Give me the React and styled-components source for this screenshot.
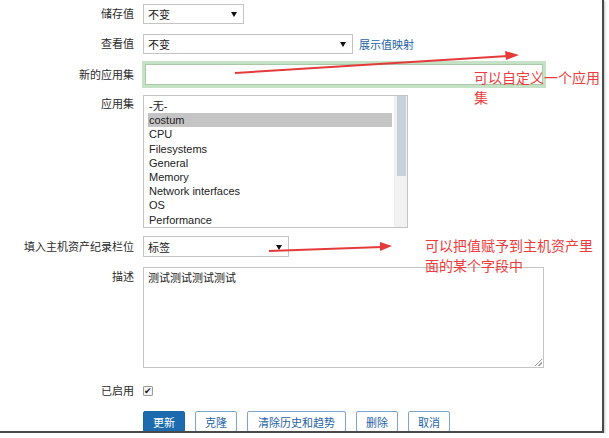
import React from "react";
import styled, { createGlobalStyle } from "styled-components";

const Global = createGlobalStyle`
  html, body { margin: 0; padding: 0; background: #ffffff; }
  body { font-family: "Liberation Sans", "Noto Sans CJK SC", sans-serif; }
`;

const Page = styled.div`
  position: relative;
  width: 604px;
  height: 433px;
  box-sizing: border-box;
  background: #fff;
  border-right: 2px solid #4a4a4a;
  border-bottom: 2px solid #4a4a4a;
  box-shadow: 1px 1px 2px rgba(0, 0, 0, 0.25);
  overflow: hidden;
`;

const Form = styled.div`
  display: grid;
  grid-template-columns: 134px 1fr;
  column-gap: 9px;
  row-gap: 10px;
  padding-top: 4px;
  font-size: 11px;
  color: #333;
`;

const Label = styled.div`
  text-align: right;
  line-height: ${(p) => p.$lh || 20}px;
  align-self: ${(p) => (p.$top ? "start" : "center")};
  margin-top: ${(p) => p.$mt || 0}px;
  white-space: nowrap;
  color: #2b2b2b;
`;

const Field = styled.div`
  display: flex;
  align-items: center;
  gap: 6px;
  margin-top: ${(p) => p.$mt || 0}px;
`;

const Select = styled.div`
  position: relative;
  box-sizing: border-box;
  width: ${(p) => p.$w}px;
  height: ${(p) => p.$h || 20}px;
  border: 1px solid #c4c4c4;
  background: #fff;
  padding-left: 4px;
  display: flex;
  align-items: center;
  color: #222;
  &::after {
    content: "";
    position: absolute;
    right: 6px;
    top: 50%;
    margin-top: -2px;
    border-left: 3px solid transparent;
    border-right: 3px solid transparent;
    border-top: 5px solid #111;
  }
`;

const Link = styled.span`
  color: #1f64a8;
`;

const TextInput = styled.div`
  box-sizing: border-box;
  width: 398px;
  height: 21px;
  margin-left: 2px;
  border: 1px solid #a9c9a9;
  background: #fff;
  box-shadow: 0 0 0 3px #c6e2c6;
`;

const ListBox = styled.div`
  box-sizing: border-box;
  width: 265px;
  height: 133px;
  border: 1px solid #c4c4c4;
  background: #fff;
  display: flex;
  overflow: hidden;
`;

const Items = styled.div`
  flex: 1;
  padding: 3px 2px 0 4px;
`;

const Item = styled.div`
  height: 14.2px;
  line-height: 14.2px;
  padding-left: 1px;
  color: #222;
  background: ${(p) => (p.$sel ? "#c4c4c4" : "transparent")};
`;

const Scrollbar = styled.div`
  width: 12px;
  border-left: 1px solid #eeeeee;
  background: #f1f1f1;
  display: flex;
  flex-direction: column;
  align-items: center;
`;

const Thumb = styled.div`
  width: 9px;
  height: 80px;
  background: #c7d1db;
`;

const TextArea = styled.div`
  position: relative;
  box-sizing: border-box;
  width: 401px;
  height: 101px;
  border: 1px solid #c4c4c4;
  padding: 3px 4px;
  line-height: 14px;
  color: #222;
  &::after {
    content: "";
    position: absolute;
    right: 1px;
    bottom: 1px;
    width: 7px;
    height: 7px;
    background: linear-gradient(135deg, transparent 45%, #999 45%, #999 55%, transparent 55%, transparent 70%, #999 70%, #999 80%, transparent 80%);
  }
`;

const Check = styled.div`
  box-sizing: border-box;
  width: 10px;
  height: 10px;
  border: 1px solid #9a9a9a;
  border-radius: 1px;
  background: #f3f3f3;
  display: flex;
  align-items: center;
  justify-content: center;
  font-size: 9px;
  line-height: 1;
  color: #222;
`;

const Buttons = styled.div`
  display: flex;
  gap: 10px;
`;

const Button = styled.div`
  box-sizing: border-box;
  height: 21px;
  padding: 0 ${(p) => p.$px || 9}px;
  display: flex;
  align-items: center;
  border: 1px solid ${(p) => (p.$primary ? "#1a67a8" : "#7ea4c8")};
  border-radius: 2px;
  background: ${(p) => (p.$primary ? "#1b6bae" : "#fff")};
  color: ${(p) => (p.$primary ? "#fff" : "#1f64a8")};
  font-size: 11px;
`;

const Note = styled.div`
  position: absolute;
  left: ${(p) => p.$x}px;
  top: ${(p) => p.$y}px;
  width: ${(p) => p.$w}px;
  font-family: "Noto Sans CJK SC", sans-serif;
  font-size: 14px;
  line-height: 20px;
  color: #ee3b3b;
`;

const Overlay = styled.svg`
  position: absolute;
  left: 0;
  top: 0;
  pointer-events: none;
`;

const apps = [
  "-无-",
  "costum",
  "CPU",
  "Filesystems",
  "General",
  "Memory",
  "Network interfaces",
  "OS",
  "Performance",
];

export default function App() {
  return (
    <>
      <Global />
      <Page>
        <Form>
          <Label>储存值</Label>
          <Field>
            <Select $w={101}>不变</Select>
          </Field>

          <Label>查看值</Label>
          <Field>
            <Select $w={210}>不变</Select>
            <Link>展示值映射</Link>
          </Field>

          <Label>新的应用集</Label>
          <Field>
            <TextInput />
          </Field>

          <Label $top $mt={-1}>应用集</Label>
          <Field>
            <ListBox>
              <Items>
                {apps.map((a, i) => (
                  <Item key={a} $sel={i === 1}>
                    {a}
                  </Item>
                ))}
              </Items>
              <Scrollbar>
                <Thumb />
              </Scrollbar>
            </ListBox>
          </Field>

          <Label $mt={-2}>填入主机资产纪录栏位</Label>
          <Field $mt={-2}>
            <Select $w={146} $h={21}>标签</Select>
          </Field>

          <Label $top>描述</Label>
          <Field>
            <TextArea>测试测试测试测试</TextArea>
          </Field>

          <Label $mt={3}>已启用</Label>
          <Field $mt={3}>
            <Check>✔</Check>
          </Field>

          <div />
          <Buttons>
            <Button $primary>更新</Button>
            <Button>克隆</Button>
            <Button $px={10}>清除历史和趋势</Button>
            <Button>删除</Button>
            <Button>取消</Button>
          </Buttons>
        </Form>

        <Overlay width="604" height="433" viewBox="0 0 604 433">
          <line x1="235" y1="73" x2="508" y2="56" stroke="#e53a3a" strokeWidth="2" />
          <polygon points="519,55 505,51 506,60" fill="#e53a3a" />
          <line x1="269" y1="251" x2="382" y2="247" stroke="#e53a3a" strokeWidth="2" />
          <polygon points="392,246 380,242 380,251" fill="#e53a3a" />
        </Overlay>
        <Note $x={474} $y={67} $w={132}>可以自定义一个应用集</Note>
        <Note $x={425} $y={235} $w={176}>可以把值赋予到主机资产里面的某个字段中</Note>
      </Page>
    </>
  );
}
